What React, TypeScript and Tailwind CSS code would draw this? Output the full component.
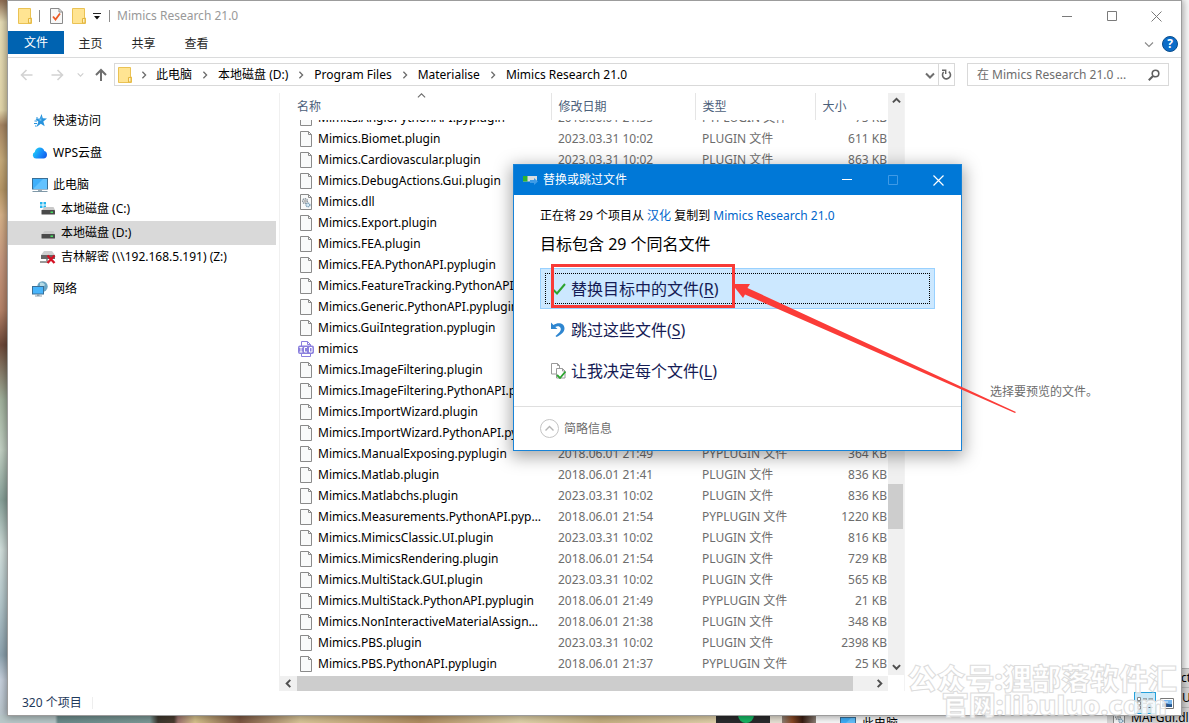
import React from "react";

type IconKind = "file" | "dll" | "ico";
type Row = { name: string; date: string; type: string; size: string; icon?: IconKind };

const PLUGIN = "PLUGIN 文件";
const PYPLUGIN = "PYPLUGIN 文件";

const rows: Row[] = [
  { name: "Mimics.AngioPythonAPI.pyplugin", date: "2018.06.01 21:55", type: PYPLUGIN, size: "75 KB" },
  { name: "Mimics.Biomet.plugin", date: "2023.03.31 10:02", type: PLUGIN, size: "611 KB" },
  { name: "Mimics.Cardiovascular.plugin", date: "2023.03.31 10:02", type: PLUGIN, size: "863 KB" },
  { name: "Mimics.DebugActions.Gui.plugin", date: "2018.06.01 21:54", type: PLUGIN, size: "402 KB" },
  { name: "Mimics.dll", date: "2023.03.31 10:02", type: "应用程序扩展", size: "918 KB", icon: "dll" },
  { name: "Mimics.Export.plugin", date: "2023.03.31 10:02", type: PLUGIN, size: "744 KB" },
  { name: "Mimics.FEA.plugin", date: "2023.03.31 10:02", type: PLUGIN, size: "640 KB" },
  { name: "Mimics.FEA.PythonAPI.pyplugin", date: "2018.06.01 21:49", type: PYPLUGIN, size: "38 KB" },
  { name: "Mimics.FeatureTracking.PythonAPI.pyplugin", date: "2018.06.01 21:49", type: PYPLUGIN, size: "26 KB" },
  { name: "Mimics.Generic.PythonAPI.pyplugin", date: "2018.06.01 21:49", type: PYPLUGIN, size: "51 KB" },
  { name: "Mimics.GuiIntegration.pyplugin", date: "2018.06.01 21:49", type: PYPLUGIN, size: "64 KB" },
  { name: "mimics", date: "2018.06.01 21:49", type: "图标", size: "12 KB", icon: "ico" },
  { name: "Mimics.ImageFiltering.plugin", date: "2023.03.31 10:02", type: PLUGIN, size: "512 KB" },
  { name: "Mimics.ImageFiltering.PythonAPI.pyplugin", date: "2018.06.01 21:49", type: PYPLUGIN, size: "33 KB" },
  { name: "Mimics.ImportWizard.plugin", date: "2023.03.31 10:02", type: PLUGIN, size: "980 KB" },
  { name: "Mimics.ImportWizard.PythonAPI.pyplugin", date: "2018.06.01 21:49", type: PYPLUGIN, size: "47 KB" },
  { name: "Mimics.ManualExposing.pyplugin", date: "2018.06.01 21:49", type: PYPLUGIN, size: "364 KB" },
  { name: "Mimics.Matlab.plugin", date: "2018.06.01 21:41", type: PLUGIN, size: "836 KB" },
  { name: "Mimics.Matlabchs.plugin", date: "2023.03.31 10:02", type: PLUGIN, size: "836 KB" },
  { name: "Mimics.Measurements.PythonAPI.pyplugin", date: "2018.06.01 21:54", type: PYPLUGIN, size: "1220 KB" },
  { name: "Mimics.MimicsClassic.UI.plugin", date: "2023.03.31 10:02", type: PLUGIN, size: "816 KB" },
  { name: "Mimics.MimicsRendering.plugin", date: "2018.06.01 21:54", type: PLUGIN, size: "729 KB" },
  { name: "Mimics.MultiStack.GUI.plugin", date: "2023.03.31 10:02", type: PLUGIN, size: "565 KB" },
  { name: "Mimics.MultiStack.PythonAPI.pyplugin", date: "2018.06.01 21:49", type: PYPLUGIN, size: "21 KB" },
  { name: "Mimics.NonInteractiveMaterialAssignment.plugin", date: "2018.06.01 21:38", type: PLUGIN, size: "348 KB" },
  { name: "Mimics.PBS.plugin", date: "2023.03.31 10:02", type: PLUGIN, size: "2398 KB" },
  { name: "Mimics.PBS.PythonAPI.pyplugin", date: "2018.06.01 21:37", type: PYPLUGIN, size: "25 KB" },
];

function Folder() {
  return (
    <svg width="14" height="16" viewBox="0 0 14 16" className="shrink-0">
      <path d="M.5.5h12v9.5h1v5.5H.5z" fill="#ffe08a" stroke="#eac254" />
      <path d="M1 1h11v9H9.8v5H1z" fill="#ffe492" />
      <path d="M10.500 15v-4.500h2.500V15z" fill="#fff0bd" stroke="#e3b63f" />
    </svg>
  );
}

function PageCheck() {
  return (
    <svg width="13" height="16" viewBox="0 0 13 16" className="shrink-0">
      <path d="M.5.5h8.500l3.500 3.500v11.500h-12z" fill="#f8f8f8" stroke="#8a8a8a" />
      <path d="M9 .5V4h3.500" fill="none" stroke="#8a8a8a" />
      <path d="M3 8.500l2.500 3 4.500-6" fill="none" stroke="#ec5a24" strokeWidth="1.800" />
    </svg>
  );
}

function Chevron({ dir, className = "text-[#6b6b6b]", size = 8, weight = 1.6 }: { dir: "up" | "down" | "left" | "right"; className?: string; size?: number; weight?: number }) {
  const d = { up: "M1 6l4-4 4 4", down: "M1 3.500l4 4 4-4", left: "M7 1L3 5l4 4", right: "M3 1l4 4-4 4" }[dir];
  return (
    <svg width={size} height={size} viewBox="0 0 10 10" className={`shrink-0 ${className}`}>
      <path d={d} fill="none" stroke="currentColor" strokeWidth={weight} />
    </svg>
  );
}

function Arrow({ dir, className }: { dir: "left" | "right" | "up"; className: string }) {
  const d = { left: "M12.500 7H1.500M6.500 2l-5 5 5 5", right: "M1.500 7h11M7.500 2l5 5-5 5", up: "M7 13V2M2 7l5-5 5 5" }[dir];
  return (
    <svg width="14" height="14" viewBox="0 0 14 14" className={`shrink-0 ${className}`}>
      <path d={d} fill="none" stroke="currentColor" strokeWidth={dir === "up" ? 2 : 1.6} />
    </svg>
  );
}

function FileIcon({ kind }: { kind: IconKind }) {
  if (kind === "ico") {
    return (
      <svg width="16" height="16" viewBox="0 0 16 16" className="-ml-0.5 shrink-0">
        <path d="M3.500 5V.5h6l3 3V5M3.500 12v3.500h9V12M9.500.5v3h3" fill="#fff" stroke="#8b80de" />
        <rect x="0" y="4.500" width="16" height="8.500" rx="2" fill="#8b80de" />
        <path d="M1.500 6.500h3M3 6.500V11M1.500 11h3M9 6.500H6.500V11H9M11.500 6.500h2.500V11h-2.500z" fill="none" stroke="#fff" />
      </svg>
    );
  }
  return (
    <svg width="12" height="16" viewBox="0 0 12 16" className="shrink-0">
      <path d="M.5.5h8l3 3v12H.5z" fill="#f9fafa" stroke="#8a8a8a" />
      <path d="M8.500.5v3h3" fill="none" stroke="#8a8a8a" />
      {kind === "dll" && (
        <g>
          <circle cx="5" cy="7" r="2.300" fill="#eee" stroke="#8d979f" strokeWidth="1.600" strokeDasharray="1.300 .6" />
          <circle cx="8" cy="11" r="1.900" fill="#d7ebf7" stroke="#7c9db4" strokeWidth="1.400" strokeDasharray="1.100 .5" />
          <circle cx="5" cy="7" r=".8" fill="#777" />
        </g>
      )}
    </svg>
  );
}

function Monitor() {
  return (
    <svg width="16" height="15" viewBox="0 0 16 15" className="shrink-0">
      <rect x=".5" y=".5" width="15" height="10.500" fill="#3fb0fb" stroke="#3a6f96" />
      <path d="M1 11L11 1h4v10z" fill="#62c2ff" />
      <path d="M6 11.500h4v1.500H6z" fill="#9aabb6" />
      <path d="M.5 13.500h15" stroke="#7f98a8" />
    </svg>
  );
}

function Drive({ variant }: { variant: "c" | "d" | "z" }) {
  return (
    <svg width="16" height="16" viewBox="0 0 16 16" className="shrink-0">
      {variant === "c" && <path d="M0 1h2.500v2.500H0zM3.500 1H6v2.500H3.500zM0 4.500h2.500V7H0zM3.500 4.500H6V7H3.500z" fill="#25b5ee" />}
      {variant === "z" ? (
        <g>
          <path d="M4 2h8l3 4H1z" fill="#cfcfcf" />
          <path d="M1 6h14v4H1z" fill="#666" />
          <path d="M6 10h2v3H6zM0 12h9v2H0z" fill="#9a9a9a" />
          <path d="M7.500 6.500l7 7.500M14.500 6.500l-7 7.500" stroke="#d41224" strokeWidth="2.400" />
        </g>
      ) : (
        <g>
          <path d="M4.500 6h9L15 9H2z" fill="#c9c9c9" />
          <rect x="1.500" y="9" width="13.500" height="4.500" rx=".6" fill="#4a4a4a" />
          <rect x="10.500" y="10.500" width="2.500" height="1.500" fill="#45e05e" />
        </g>
      )}
    </svg>
  );
}

function Star() {
  return (
    <svg width="16" height="14" viewBox="0 0 16 14" className="shrink-0">
      <path d="M9.500 0l1.300 4.300 4.200.2-3.700 3 1.400 4.800-3.900-2.600L4.500 13l1.900-5.200L3.500 5l4.300-.5z" fill="#2793dd" />
      <path d="M9.300 2L8.500 5.300 6 5.700l3.300 1.300z" fill="#7cc7f4" />
      <path d="M2.500 7h2.500M2 9.500h3M3 12h1.500M4 4h2" stroke="#2793dd" />
    </svg>
  );
}

function Cloud() {
  return (
    <svg width="16" height="12" viewBox="0 0 16 12" className="shrink-0">
      <defs>
        <linearGradient id="cloud" x1="0" x2="1" y1=".3" y2=".8">
          <stop offset="0" stopColor="#21d0f5" />
          <stop offset=".6" stopColor="#1687fb" />
          <stop offset="1" stopColor="#125be8" />
        </linearGradient>
      </defs>
      <path d="M4 11.500A3.400 3.400 0 012.800 5C3.300 2 5.500.5 7.800.5c2.400 0 4 1.500 4.500 3.500 1.900.4 2.700 1.900 2.700 3.700 0 2.200-1.500 3.800-3.500 3.800z" fill="url(#cloud)" />
    </svg>
  );
}

function Network() {
  return (
    <svg width="16" height="16" viewBox="0 0 16 16" className="shrink-0">
      <circle cx="10.500" cy="5.500" r="5.200" fill="#6ba6c4" />
      <path d="M8 2c2-1 4 0 5 2l-2 2-3-1z" fill="#b5dbe6" />
      <rect x=".5" y="5.500" width="11" height="7.500" fill="#48b5fb" stroke="#3a6f96" />
      <path d="M5 13h2.500v1.500H5zM3 14.500h7v1H3z" fill="#8ea2ae" />
    </svg>
  );
}

const navItems = [
  { label: "快速访问", icon: <Star />, cls: "mt-4 pl-6" },
  { label: "WPS云盘", icon: <Cloud />, cls: "mt-2 pl-6" },
  { label: "此电脑", icon: <Monitor />, cls: "mt-2 pl-6" },
  { label: "本地磁盘 (C:)", icon: <Drive variant="c" />, cls: "pl-8" },
  { label: "本地磁盘 (D:)", icon: <Drive variant="d" />, cls: "bg-[#d9d9d9] pl-8" },
  { label: "吉林解密 (\\\\192.168.5.191) (Z:)", icon: <Drive variant="z" />, cls: "pl-8" },
  { label: "网络", icon: <Network />, cls: "mt-2 pl-6" },
];

function Desktop() {
  return (
    <div aria-hidden="true" className="absolute inset-0 overflow-hidden">
      <div className="absolute inset-y-0 left-0 w-2 bg-[linear-gradient(180deg,#8d6b52_0,#e9dfb8_22px,#e6d9ad_110px,#a98764_125px,#c9ad7c_160px,#b99968_190px,#d9b48a_215px,#c99a80_260px,#b88469_310px,#6f4a3a_345px,#a3b49f_400px,#c5d3c6_450px,#8aa39b_500px,#d5e2df_550px,#b9ccd0_600px,#8fa5b1_655px,#c9d3e0_680px,#b7c4c9_723px)]" />
      <div className="absolute bottom-0 left-0 h-2 w-full bg-[linear-gradient(90deg,#b9c8c9_0,#b9c8c9_55px,#6c8c8c_58px,#7d9a97_150px,#3d372e_158px,#4b3d30_174px,#a07670_178px,#d9c48e_195px,#7d5742_240px,#dcc89a_300px,#b28f63_420px,#e3d5ac_520px,#c8b283_600px,#e3d3ac_716px)]" />
      <div className="absolute bottom-0 left-[716px] flex h-2 w-[100px]">
        <div className="w-[54px] bg-[#2b2b2d]"><div className="ml-[22px] h-2 w-4 rounded-b-full bg-[#17b865]" /></div>
        <div className="w-3 bg-[#e9e3d6]" />
        <div className="grow bg-[linear-gradient(90deg,#8d8177,#8b4a26_30%,#3a1d12_60%,#8d8177)]" />
      </div>
      <div className="absolute inset-y-0 left-[816px] right-0 bg-[#fbfbfb]">
        <div className="absolute -bottom-2.5 left-6 flex items-center gap-1.5"><Monitor /><span>此电脑</span></div>
        <div className="absolute bottom-0 right-0 flex h-[55px] w-[82px] flex-col border-t border-[#b5b5b5] bg-[#d9d9d9]">
          <div className="h-[18px] pl-[74px] leading-[18px]">cti</div>
          <div className="h-5 border-t border-[#bbb] pl-[75px] leading-5">U</div>
          <div className="flex h-[21px] shrink-0 items-center gap-1.5 border-t border-[#bbb] pl-1.5"><FileIcon kind="dll" />MAFGui.dll</div>
        </div>
      </div>
    </div>
  );
}

function TitleBar() {
  return (
    <div className="flex h-[30px] shrink-0 items-center pl-2.5">
      <Folder />
      <span className="ml-[7px] h-3 w-px bg-[#8c8c8c]" />
      <button aria-label="属性" className="ml-2.5"><PageCheck /></button>
      <button aria-label="新建文件夹" className="ml-[9px]"><Folder /></button>
      <button aria-label="自定义快速访问工具栏" className="ml-[7px]">
        <svg width="8" height="7" viewBox="0 0 8 7"><path d="M0 .5h8" stroke="#222" /><path d="M1 3h6L4 6.500z" fill="#111" /></svg>
      </button>
      <span className="ml-2 h-3 w-px bg-[#8c8c8c]" />
      <span className="ml-[7px] text-[#999]">Mimics Research 21.0</span>
      <div className="ml-auto flex h-full pr-0.5 text-[#7a7a7a]">
        <button aria-label="最小化" className="grid w-[45px] place-items-center"><svg width="10" height="10"><path d="M0 5.500h10" stroke="currentColor" /></svg></button>
        <button aria-label="最大化" className="grid w-[45px] place-items-center"><svg width="10" height="10"><path d="M.5.5h9v9h-9z" fill="none" stroke="currentColor" /></svg></button>
        <button aria-label="关闭" className="grid w-[45px] place-items-center"><svg width="11" height="11"><path d="M.5.5l10 10M10.500.5l-10 10" stroke="currentColor" /></svg></button>
      </div>
    </div>
  );
}

function Ribbon() {
  return (
    <div className="flex h-[27px] shrink-0 items-start border-b border-[#dadbdc] text-[#262626]">
      <button className="h-[23px] w-14 bg-[#0063b1] text-white">文件</button>
      {["主页", "共享", "查看"].map((t) => (
        <button key={t} className="h-[25px] w-[53px]">{t}</button>
      ))}
      <div className="ml-auto flex h-[26px] items-center gap-2 pr-[3px]">
        <button aria-label="展开功能区"><Chevron dir="down" size={10} weight={1.1} className="text-[#8a8a8a]" /></button>
        <button aria-label="帮助" className="grid size-4 place-items-center rounded-full border border-[#0a4d8c] bg-[#0b6cc8] text-[12px] font-bold leading-none text-white">?</button>
      </div>
    </div>
  );
}

function AddressBar() {
  const crumbs = ["此电脑", "本地磁盘 (D:)", "Program Files", "Materialise", "Mimics Research 21.0"];
  return (
    <div className="flex h-[35px] shrink-0 items-center pb-0.5 pl-3 pr-3">
      <button aria-label="后退"><Arrow dir="left" className="text-[#d2d2d2]" /></button>
      <button aria-label="前进" className="ml-4"><Arrow dir="right" className="text-[#d2d2d2]" /></button>
      <button aria-label="最近位置" className="ml-[13px]"><Chevron dir="down" size={7} className="text-[#cfcfcf]" /></button>
      <button aria-label="上移" className="ml-2.5"><Arrow dir="up" className="text-[#6e6e6e]" /></button>
      <nav aria-label="地址" className="ml-1.5 flex h-[23px] grow items-center border border-[#d9d9d9] pl-[3px]">
        <Folder />
        {crumbs.map((c, i) => (
          <React.Fragment key={c}>
            <span className={i === 0 ? "grid w-6 place-items-center" : "grid w-[26px] place-items-center"}><Chevron dir="right" /></span>
            <a href="#" className="whitespace-nowrap text-black">{c}</a>
          </React.Fragment>
        ))}
        <button aria-label="以前的位置" className="ml-auto mr-[3px]"><Chevron dir="down" size={10} weight={2} className="text-[#6e6e6e]" /></button>
        <button aria-label="刷新" className="grid h-full w-4 place-items-center border-l border-[#d9d9d9]">
          <svg width="11" height="12" viewBox="0 0 11 12"><path d="M7.800 2.600A4 4 0 112.700 3" fill="none" stroke="#666" strokeWidth="1.600" /><path d="M1 1.200h3.700V5" fill="none" stroke="#666" strokeWidth="1.400" /></svg>
        </button>
      </nav>
      <label className="ml-3 flex h-[23px] w-[202px] items-center border border-[#d9d9d9] pl-[9px] pr-2">
        <input aria-label="搜索" placeholder="在 Mimics Research 21.0 ..." className="w-0 grow bg-transparent outline-none placeholder:text-[#6d6d6d]" />
        <svg width="12" height="12" viewBox="0 0 12 12" className="shrink-0"><circle cx="7.500" cy="4.500" r="3.300" fill="none" stroke="#5e5e5e" strokeWidth="1.600" /><path d="M5 7L.8 11.200" stroke="#5e5e5e" strokeWidth="2" /></svg>
      </label>
    </div>
  );
}

function NameCell({ row }: { row: Row }) {
  return (
    <div className="flex h-[21px] shrink-0 items-center gap-1.5 pl-5 pr-2">
      <FileIcon kind={row.icon ?? "file"} />
      <span className={row.icon === "ico" ? "-ml-0.5 truncate" : "truncate"}>{row.name}</span>
    </div>
  );
}

function FileTable() {
  return (
    <table className="w-full table-fixed border-collapse text-left">
      <colgroup>
        <col />
        <col className="w-36" />
        <col className="w-[120px]" />
        <col className="w-[73px]" />
      </colgroup>
      <thead className="text-[#4c607a]">
        <tr className="h-[27px]">
          <th className="relative border-r border-[#e5e5e5] p-0 pl-[17px] font-normal">
            名称
            <span className="absolute inset-x-0 -top-px grid place-items-center pl-3"><Chevron dir="up" size={9} weight={1.2} /></span>
          </th>
          <th className="border-r border-[#e5e5e5] p-0 pl-[7px] font-normal">修改日期</th>
          <th className="border-r border-[#e5e5e5] p-0 pl-[7px] font-normal">类型</th>
          <th className="p-0 pl-[7px] font-normal">大小</th>
        </tr>
      </thead>
      <tbody className="text-[#6d6d6d]">
        {rows.map((row, i) => {
          const clip = i === 0 ? "flex h-2 flex-col justify-end overflow-hidden" : "";
          return (
            <tr key={row.name}>
              <td className="p-0 text-black"><div className={clip}><NameCell row={row} /></div></td>
              <td className="p-0 pl-[7px]"><div className={clip}><div className="h-[21px] shrink-0 leading-[21px]">{row.date}</div></div></td>
              <td className="p-0 pl-[7px]"><div className={clip}><div className="h-[21px] shrink-0 leading-[21px]">{row.type}</div></div></td>
              <td className="p-0 pr-px text-right"><div className={clip}><div className="h-[21px] shrink-0 whitespace-nowrap leading-[21px]">{row.size}</div></div></td>
            </tr>
          );
        })}
      </tbody>
    </table>
  );
}

function FileList() {
  return (
    <section className="flex min-w-0 grow flex-col">
      <div className="flex min-h-0 grow">
        <div className="min-w-0 grow overflow-hidden"><FileTable /></div>
        <div className="flex w-4 shrink-0 flex-col bg-[#f0f0f0]">
          <button aria-label="向上滚动" className="grid h-[17px] place-items-center"><Chevron dir="up" size={9} weight={2.2} className="text-[#505050]" /></button>
          <div className="grow-[373]" />
          <div className="mr-px h-[45px] bg-[#cdcdcd]" />
          <div className="grow-[129]" />
          <button aria-label="向下滚动" className="grid h-[17px] place-items-center"><Chevron dir="down" size={9} weight={2.2} className="text-[#505050]" /></button>
        </div>
      </div>
      <div className="mr-4 mt-px flex h-[15px] shrink-0 bg-[#f0f0f0]">
        <button aria-label="向左滚动" className="grid w-[17px] place-items-center"><Chevron dir="left" size={9} weight={2.2} className="text-[#505050]" /></button>
        <div className="grow bg-[#cdcdcd]" />
        <div className="w-[18px]" />
        <button aria-label="向右滚动" className="grid w-[17px] place-items-center"><Chevron dir="right" size={9} weight={2.2} className="text-[#505050]" /></button>
      </div>
    </section>
  );
}

function StatusBar() {
  return (
    <footer className="flex h-6 shrink-0 items-center pl-[14px] pr-[5px] text-[#1e395b]">
      <span>320 个项目</span>
      <span className="ml-2.5 h-3 w-px bg-[#eee]" />
      <div className="ml-auto flex items-center gap-1">
        <button aria-label="详细信息" className="grid size-[22px] place-items-center border border-[#26a0da] bg-[#cce8f7]">
          <svg width="16" height="13" viewBox="0 0 16 13"><path d="M.5.5h3v3h-3zM.5 4.800h3v3h-3zM.5 9h3v3h-3z" fill="#fff" stroke="#7a7a7a" strokeWidth=".9" /><path d="M6 2h4M11.500 2H16M6 6.300h4M11.500 6.300H16M6 10.500h4M11.500 10.500H16" stroke="#666" /></svg>
        </button>
        <button aria-label="大缩略图" className="mr-0.5">
          <svg width="14" height="11" viewBox="0 0 14 11"><path d="M.5.5h13v10H.5z" fill="#fff" stroke="#777" /><path d="M2 2h10v7H2z" fill="#78b7ee" /><path d="M2 6c3-2 6 1 10 0v3H2z" fill="#27568c" /><path d="M3 3.500h5v1H3z" fill="#e6f3fc" /></svg>
        </button>
      </div>
    </footer>
  );
}

function Dialog() {
  return (
    <div role="dialog" aria-labelledby="dlg-title" className="absolute left-[513px] top-[164px] flex w-[449px] flex-col border border-[#1883d7] bg-white shadow-[0_4px_16px_2px_rgba(0,0,0,0.35)]">
      <header className="flex h-[30px] items-center bg-[#0078d7] pl-[9px] text-white">
        <svg width="15" height="10" viewBox="0 0 15 10"><path d="M0 1h14v5.500H0z" fill="#d8dde0" /><path d="M0 1h4.500v5.500H0z" fill="#2fb32f" /><path d="M7 5h4V3l4 3.500-4 3.500V8H7z" fill="#3d9be6" /></svg>
        <h2 id="dlg-title" className="ml-[5px]">替换或跳过文件</h2>
        <div className="ml-auto flex h-full">
          <button aria-label="最小化" className="grid w-[46px] place-items-center"><svg width="10" height="10"><path d="M0 4.500h10" stroke="#fff" /></svg></button>
          <button aria-label="最大化" disabled className="grid w-[45px] place-items-center"><svg width="10" height="10"><path d="M.5.5h9v9h-9z" fill="none" stroke="#3f9ae6" /></svg></button>
          <button aria-label="关闭" className="grid w-[46px] place-items-center"><svg width="11" height="11"><path d="M.5.5l10 10M10.500.5l-10 10" stroke="#fff" strokeWidth="1.200" /></svg></button>
        </div>
      </header>
      <div className="pl-[26px] pr-[26px] pt-[11px]">
        <p className="leading-5">
          正在将 29 个项目从 <a href="#" className="text-[#0066cc]">汉化</a> 复制到 <a href="#" className="text-[#0066cc]">Mimics Research 21.0</a>
        </p>
        <p className="mt-1.5 text-[16px] leading-6">目标包含 29 个同名文件</p>
        <div className="mt-3 flex flex-col text-[16px] text-[#151c55]">
          <button className="h-[41px] border border-[#99d1ff] bg-[#cce8ff] p-1 text-left">
            <span className="flex h-full items-center gap-[5px] border border-dotted border-black pl-1.5">
              <svg width="14" height="12" viewBox="0 0 14 12"><path d="M1 6.500l4 4L13 1" fill="none" stroke="#2ca42f" strokeWidth="2" /></svg>
              <span>替换目标中的文件(<u className="underline-offset-2">R</u>)</span>
            </span>
          </button>
          <button className="flex h-[41px] items-center gap-1.5 pl-[11px] text-left">
            <svg width="14" height="15" viewBox="0 0 14 15"><path d="M0 .5v6.500h6.500L4.300 5C8 2.500 11.500 6 9 9.500c-.8 1.300-2.500 2.700-4.500 4.500l1 1c4.500-2 8-5 8-8.500C13.500 1 7 0 2.500 3z" fill="#2e86d0" /></svg>
            <span>跳过这些文件(<u className="underline-offset-2">S</u>)</span>
          </button>
          <button className="flex h-[41px] items-center gap-[5px] pl-[11px] text-left">
            <svg width="15" height="16" viewBox="0 0 15 16"><path d="M.5.5h6l2 2V11h-8z" fill="#fff" stroke="#9a9a9a" /><path d="M6.500.5v2h2" fill="none" stroke="#9a9a9a" /><path d="M5.500 5.500h6l2.500 2.500v7H5.500z" fill="#fff" stroke="#9a9a9a" /><path d="M11.500 5.500V8H14" fill="none" stroke="#9a9a9a" /><path d="M6 12l3 3 5.500-6.500" fill="none" stroke="#2ca42f" strokeWidth="1.800" /></svg>
            <span>让我决定每个文件(<u className="underline-offset-2">L</u>)</span>
          </button>
        </div>
      </div>
      <footer className="mt-[15px] flex h-11 items-center border-t border-[#dfdfdf] pl-[26px]">
        <button className="flex items-center gap-[5px] text-[#6d6d6d]">
          <svg width="19" height="19" viewBox="0 0 19 19"><circle cx="9.500" cy="9.500" r="9" fill="none" stroke="#c4c4c4" /><path d="M5.500 11.500l4-4 4 4" fill="none" stroke="#b5b5b5" strokeWidth="1.400" /></svg>
          简略信息
        </button>
      </footer>
    </div>
  );
}

function Markup() {
  return (
    <div aria-hidden="true" className="pointer-events-none">
      <div className="absolute left-[551px] top-[264px] h-11 w-[184px] border-3 border-[#f83b37]" />
      <svg width="286" height="132" viewBox="0 0 286 132" className="absolute left-[731px] top-[282px]">
        <path d="M1 2L19 2 16.500 6 285 130 284 131 14 12.500 12 16z" fill="#fb3c38" />
      </svg>
    </div>
  );
}

function Watermark() {
  return (
    <div className="pointer-events-none absolute bottom-[5px] right-3 flex flex-col items-end font-black leading-[26px] text-white/80 [-webkit-text-stroke:1px_#dcdcdc]">
      <span className="text-[29px]">公众号:狸部落软件汇</span>
      <span className="pr-2.5 text-[27px]">官网:libuluo.com</span>
    </div>
  );
}

export default function App() {
  return (
    <div className="relative flex h-screen w-full overflow-hidden px-[7px] pb-[7px] font-['Noto_Sans','Noto_Sans_CJK_SC',sans-serif] text-[12px] leading-[18px] text-black">
      <Desktop />
      <main className="relative flex min-w-0 grow flex-col border border-[#9c9c9c] bg-white shadow-[0_0_8px_1px_rgba(0,0,0,0.4)]">
        <TitleBar />
        <Ribbon />
        <AddressBar />
        <div className="flex min-h-0 grow">
          <aside className="w-[272px] shrink-0 border-r border-[#f0f0f0] pr-[3px]">
            <ul>
              {navItems.map((n) => (
                <li key={n.label}>
                  <a href="#" className={`flex h-6 items-center gap-[5px] ${n.cls}`}>{n.icon}{n.label}</a>
                </li>
              ))}
            </ul>
          </aside>
          <FileList />
          <section className="grid w-[277px] shrink-0 place-items-center border-l border-[#f3f3f3] pl-0.5 text-[#6d6d6d]">选择要预览的文件。</section>
        </div>
        <StatusBar />
      </main>
      <Dialog />
      <Markup />
      <Watermark />
    </div>
  );
}
